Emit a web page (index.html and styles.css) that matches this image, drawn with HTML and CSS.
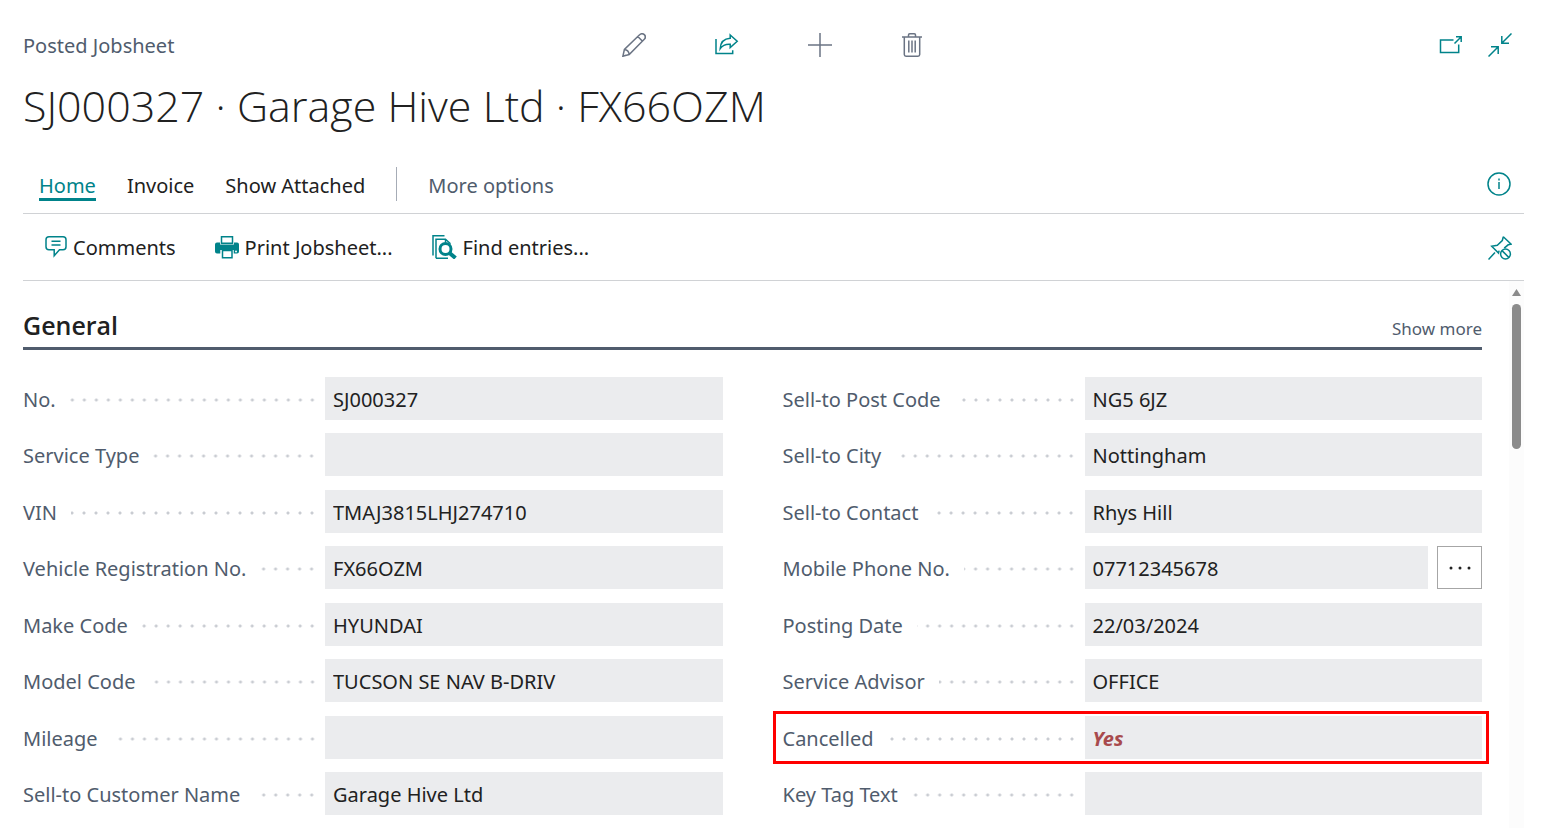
FILE: index.html
```html
<!DOCTYPE html>
<html lang="en">
<head>
<meta charset="utf-8">
<meta name="viewport" content="width=device-width, initial-scale=1">
<title>Posted Jobsheet</title>
<link rel="stylesheet" href="styles.css">
</head>
<body>
<header class="topbar">
  <div class="page-type">Posted Jobsheet</div>
  <div class="record-actions">
    <button class="icon-btn" aria-label="Edit"><svg width="24" height="24" viewBox="0 0 24 24"><path d="M.9 23.2 2.4 16.5 17.6 1.7a3 3 0 0 1 4.7 4.6L7.2 21.5ZM15.8 3.5l4.7 4.8M2.4 16.5c2.4.2 4.4 2.2 4.8 5M.9 23.2l3-1"/></svg></button>
    <button class="icon-btn teal" aria-label="Share"><svg width="24" height="24" viewBox="0 0 24 24"><path d="M1 6v14.500H17.700v-3.200" /><path d="M15.200 2l7 6.300-7 6.200v-3.300c-4.600-.3-7.700 1-10 4.500C5.600 9.500 9 5.600 15.200 5.300Z"/></svg></button>
    <button class="icon-btn" aria-label="New"><svg width="24" height="24" viewBox="0 0 24 24"><path d="M12 0v24M0 12h24"/></svg></button>
    <button class="icon-btn" aria-label="Delete"><svg width="24" height="24" viewBox="0 0 24 24"><path d="M1 4h20M7.500 4V2q0-1.200 1.200-1.200h4.600q1.200 0 1.200 1.200v2M3.300 4v17.500q0 1.700 1.700 1.700h12q1.700 0 1.700-1.700V4M7.800 7.500v12M11 7.500v12M14.200 7.500v12"/></svg></button>
  </div>
  <div class="window-actions">
    <button class="icon-btn teal" aria-label="Open in new window"><svg width="24" height="24" viewBox="0 0 24 24"><path d="M14.500 7H1.500v12.500h18.200V11.500M15.500 10.500 22 4M17 3.800h5.200V9"/></svg></button>
    <button class="icon-btn teal" aria-label="Collapse"><svg width="24" height="24" viewBox="0 0 24 24"><path d="M23.500.5 14 10M13.800 3v7.200H21M.5 23.500 10 14M3 13.800h7.200V21"/></svg></button>
  </div>
</header>
<h1 class="title">SJ000327 · Garage Hive Ltd · FX66OZM</h1>
<nav class="tabs">
  <a class="tab active" href="#home">Home</a>
  <a class="tab" href="#invoice">Invoice</a>
  <a class="tab" href="#attached">Show Attached</a>
  <span class="divider"></span>
  <a class="tab muted" href="#more">More options</a>
  <button class="icon-btn teal push" aria-label="Information"><svg width="24" height="24" viewBox="0 0 24 24"><circle cx="12" cy="12" r="11"/><path d="M12 10v7M12 6.500v2"/></svg></button>
</nav>
<div class="actions">
  <button class="action"><svg width="22" height="24" viewBox="0 0 22 24"><path d="M4 1.700h14q3 0 3 3v7q0 3-3 3h-3.500l-5.300 6v-6H4q-3 0-3-3v-7q0-3 3-3ZM6.500 6.300h9M6.500 10h9"/></svg>Comments</button>
  <button class="action"><svg width="24" height="24" viewBox="0 0 24 24"><path class="solid" d="M2 7.500h3v2h14v-2h3q2 0 2 2v7q0 2-2 2h-3.300V15H5.300v3.500H2q-2 0-2-2v-7q0-2 2-2Z"/><path d="M6.500 8.300V1.700h11v6.600ZM7.500 15.500h9.500v7.300H7.500Z"/><circle class="knock" cx="21" cy="16.500" r="1"/></svg>Print Jobsheet...</button>
  <button class="action"><svg width="25" height="24" viewBox="0 0 25 24"><path d="M1 20.500V.8h11.500M4 23.200V4.200h9.500l5 4.500M4 23.200h12M13.500 4.200v3"/><circle class="lens" cx="13.500" cy="14" r="5.500"/><path class="handle" d="m17.500 18 6 5"/></svg>Find entries...</button>
  <button class="icon-btn teal push" aria-label="Unpin"><svg width="24" height="24" viewBox="0 0 24 24"><path d="M.5 23.500 7 16.500M15.300.8l7.900 7.400-3 .6-4 3.300M15.300.8l-1 3.700-5 4.700-5.600 1 6.800 6.900.6-2.500"/><circle cx="17.500" cy="18" r="4.900"/><path d="m14 14.600 7 7"/></svg></button>
</div>
<main class="scroll-area">
  <section class="general">
    <div class="section-head"><h2>General</h2><button class="show-more">Show more</button></div>
    <form class="columns">
      <div class="column">
        <div class="field"><label for="no">No.</label><i class="dots"></i><input id="no" readonly value="SJ000327"></div>
        <div class="field"><label for="service">Service Type</label><i class="dots"></i><input id="service" readonly></div>
        <div class="field"><label for="vin">VIN</label><i class="dots"></i><input id="vin" readonly value="TMAJ3815LHJ274710"></div>
        <div class="field"><label for="reg">Vehicle Registration No.</label><i class="dots"></i><input id="reg" readonly value="FX66OZM"></div>
        <div class="field"><label for="make">Make Code</label><i class="dots"></i><input id="make" readonly value="HYUNDAI"></div>
        <div class="field"><label for="model">Model Code</label><i class="dots"></i><input id="model" readonly value="TUCSON SE NAV B-DRIV"></div>
        <div class="field"><label for="mileage">Mileage</label><i class="dots"></i><input id="mileage" readonly></div>
        <div class="field"><label for="customer">Sell-to Customer Name</label><i class="dots"></i><input id="customer" readonly value="Garage Hive Ltd"></div>
      </div>
      <div class="column">
        <div class="field"><label for="postcode">Sell-to Post Code</label><i class="dots"></i><input id="postcode" readonly value="NG5 6JZ"></div>
        <div class="field"><label for="city">Sell-to City</label><i class="dots"></i><input id="city" readonly value="Nottingham"></div>
        <div class="field"><label for="contact">Sell-to Contact</label><i class="dots"></i><input id="contact" readonly value="Rhys Hill"></div>
        <div class="field with-lookup"><label for="phone">Mobile Phone No.</label><i class="dots"></i><input id="phone" readonly value="07712345678"><button class="lookup" type="button" aria-label="Show details"><svg width="24" height="4" viewBox="0 0 24 4"><circle cx="3" cy="2" r="1.500"/><circle cx="12" cy="2" r="1.500"/><circle cx="21" cy="2" r="1.500"/></svg></button></div>
        <div class="field"><label for="date">Posting Date</label><i class="dots"></i><input id="date" readonly value="22/03/2024"></div>
        <div class="field"><label for="advisor">Service Advisor</label><i class="dots"></i><input id="advisor" readonly value="OFFICE"></div>
        <div class="field highlighted"><label for="cancelled">Cancelled</label><i class="dots"></i><input id="cancelled" class="alert" readonly value="Yes"></div>
        <div class="field"><label for="keytag">Key Tag Text</label><i class="dots"></i><input id="keytag" readonly></div>
      </div>
    </form>
  </section>
  <div class="scrollbar"><div class="arrow"></div><div class="thumb"></div></div>
</main>
</body>
</html>
```
FILE: styles.css
```css
:root {
  --teal: #00838a;
  --slate: #505c6d;
  --ink: #212121;
  --line: #d0d2d5;
  --fill: #ebecee;
}
* { box-sizing: border-box; }
body {
  margin: 0;
  padding: 0 20px 0 23px;
  height: 100vh;
  overflow: hidden;
  display: flex;
  flex-direction: column;
  background: #fff;
  color: var(--ink);
  font: 20px/28px "Noto Sans", "Open Sans", sans-serif;
}
button { border: 0; padding: 0; background: none; font: inherit; color: inherit; }
svg { display: block; fill: none; stroke: currentColor; stroke-width: 1.5; flex: none; }

.topbar {
  display: grid;
  grid-template-columns: 1fr auto 1fr;
  align-items: center;
  padding-top: 30px;
  color: var(--slate);
}
.page-type { padding-top: 2px; }
.record-actions { display: flex; gap: 69px; }
.window-actions { display: flex; gap: 25px; justify-content: flex-end; padding-right: 12px; }
.icon-btn { color: #6b7484; }
.teal { color: var(--teal); }

.title {
  margin: 16px 0 0;
  font: 300 43px/60px "Open Sans", "Noto Sans", sans-serif;
}

.tabs {
  display: flex;
  align-items: center;
  gap: 31px;
  margin-top: 31px;
  padding: 0 13px 12px 16px;
  border-bottom: 1px solid var(--line);
}
.tab {
  padding-top: 6px;
  border-bottom: 3px solid transparent;
  line-height: 25px;
  color: inherit;
  text-decoration: none;
}
.active { color: var(--teal); border-color: var(--teal); }
.muted { color: var(--slate); }
.divider { width: 1px; height: 34px; background: #a6acb6; }
.push { margin-left: auto; }

.actions {
  display: flex;
  align-items: center;
  gap: 39px;
  padding: 20px 12px 18px 22px;
  border-bottom: 1px solid var(--line);
}
.action { display: flex; align-items: center; gap: 6px; }
.action svg { margin-bottom: 3px; color: var(--teal); }
.solid { fill: currentColor; stroke: none; }
.solid + path { fill: #fff; }
.knock { fill: #fff; stroke: none; }
.lens { fill: #fff; stroke-width: 3; }
.handle { stroke-width: 4; }

.scroll-area { flex: 1; min-height: 0; display: flex; gap: 27px; }
.general { flex: 1; min-width: 0; }
.section-head {
  display: flex;
  justify-content: space-between;
  align-items: baseline;
  padding: 27px 0 4px;
  border-bottom: 3px solid var(--slate);
}
.section-head h2 { margin: 0; font: 600 25px/35px "Open Sans", "Noto Sans", sans-serif; }
.show-more { font-size: 17px; line-height: 24px; color: var(--slate); }
.columns { display: grid; grid-template-columns: 1fr 1fr; gap: 60px; margin-top: 27px; }
.column { display: grid; grid-auto-rows: 56px 57px; align-items: start; min-width: 0; }
.field {
  position: relative;
  display: grid;
  grid-template-columns: auto 1fr calc(100% - 302px);
  align-items: center;
}
.field label { padding-top: 2px; color: var(--slate); white-space: nowrap; }
.dots {
  height: 4px;
  margin: 2px 7px 0 14px;
  background: radial-gradient(circle, #c9ccd2 1px, transparent 2px) right center / 12px 4px repeat-x;
}
.field input {
  width: 100%;
  height: 43px;
  padding: 1px 8px 0;
  border: 0;
  border-radius: 0;
  background: var(--fill);
  color: var(--ink);
  font: inherit;
}
.with-lookup { grid-template-columns: auto 1fr calc(100% - 356px) 54px; }
.lookup {
  display: grid;
  place-items: center;
  height: 43px;
  margin-left: 9px;
  border: 1px solid #a6a6a6;
}
.lookup svg { fill: var(--ink); stroke: none; }
.field .alert { color: #a84a4d; font-weight: 700; font-style: italic; }
.highlighted::after {
  content: "";
  position: absolute;
  inset: -5px -7px -5px -10px;
  border: 3px solid #ff0000;
  pointer-events: none;
}
.scrollbar {
  width: 15px;
  padding: 8px 3px;
  background: #fcfcfc;
}
.arrow {
  height: 7px;
  background: #8b8b8b;
  clip-path: polygon(50% 0, 100% 100%, 0 100%);
}
.thumb { height: 145px; margin-top: 8px; border-radius: 5px; background: #8b8b8b; }
```
